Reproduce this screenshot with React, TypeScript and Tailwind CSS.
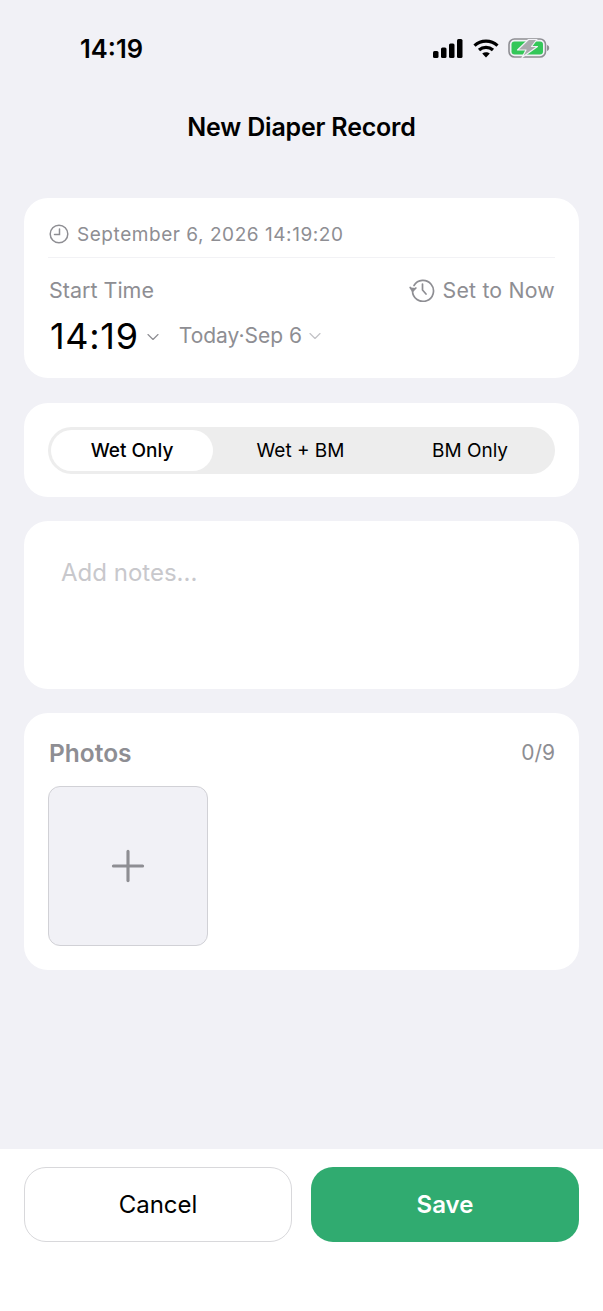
import React from 'react';
import { ChevronDown, Plus } from 'lucide-react';

const StatusIcons = () => (
  <div className="flex items-center gap-[9.5px]">
    <svg width="30" height="19" viewBox="0 0 30 19" fill="#000">
      <rect x="0" y="12" width="5.5" height="7" rx="1.5" />
      <rect x="8" y="8.5" width="5.5" height="10.5" rx="1.5" />
      <rect x="16" y="4.5" width="5.5" height="14.5" rx="1.5" />
      <rect x="24" y="0" width="5.5" height="19" rx="1.5" />
    </svg>
    <svg width="26" height="19" viewBox="0 0 26 19" fill="none" stroke="#000" strokeWidth="3.2">
      <path d="M1.5 6.6C8 .6 18 .6 24.5 6.6" />
      <path d="M6 11C10 7.4 16 7.4 20 11" />
      <path d="M13 18.5L9.2 14.6C11.4 12.8 14.6 12.8 16.8 14.6Z" fill="#000" stroke="none" />
    </svg>
    <svg width="42" height="20" viewBox="0 0 42 20" fill="none">
      <rect x="1" y="1" width="36.5" height="18" rx="5.5" stroke="#8e8e93" strokeWidth="1.6" />
      <rect x="3.5" y="3.5" width="31.5" height="13" rx="3" fill="#34c759" />
      <path d="M39 7v6c1.5-.4 2.2-1.6 2.2-3s-.7-2.6-2.2-3Z" fill="#8e8e93" />
      <path d="M20.5 1.5H29L23.5 8.5H29.5L14 19.5L18 12H9.5Z" fill="#a9a9ad" stroke="#f1f1f6" strokeWidth="1.2" strokeLinejoin="round" />
    </svg>
  </div>
);

const App: React.FC = () => {
  return (
    <div className="flex h-[1311px] w-[603px] flex-col overflow-hidden bg-[#f1f1f6] font-['Inter',sans-serif] text-black">
      <div className="flex h-[98px] items-start justify-between pl-[80px] pr-[53px] pt-[35px]">
        <span className="text-[25.5px] font-semibold leading-[28px]">14:19</span>
        <div className="pt-[3px]">
          <StatusIcons />
        </div>
      </div>

      <h1 className="h-[100px] pt-[14px] text-center text-[25px] font-semibold leading-[30px] tracking-[-0.2px]">
        New Diaper Record
      </h1>

      <div className="flex flex-1 flex-col gap-[24px] px-[24px]">
        <section className="mb-[1px] h-[180px] rounded-[24px] bg-white px-[24px] pt-[25px]">
          <div className="flex h-[35px] items-start gap-[8px] border-b border-[#f2f2f5] text-[#8e8e93]">
            <svg width="20" height="20" viewBox="0 0 20 20" fill="none" stroke="currentColor" strokeWidth="1.5" strokeLinecap="round" className="ml-[1px] mt-[1px]">
              <circle cx="10" cy="10" r="8.8" />
              <path d="M10.5 5v5.5H5.5" />
            </svg>
            <span className="text-[19px] leading-[24px] tracking-[0.55px]">September 6, 2026 14:19:20</span>
          </div>

          <div className="mt-[19px] flex items-center justify-between text-[#8e8e93]">
            <span className="pl-[1px] text-[21.5px] leading-[26px]">Start Time</span>
            <div className="flex items-center gap-[8px]">
              <svg width="26" height="26" viewBox="0 0 26 26" fill="none" stroke="currentColor" strokeWidth="1.7" strokeLinecap="round" strokeLinejoin="round" className="-mt-[3px]">
                <path d="M5 9.5A10.5 10.5 0 1 1 3.5 15" />
                <path d="M1.2 11.5L3.7 15.2L6.9 12" fill="currentColor" />
                <path d="M13.5 8v6l3.5 4" />
              </svg>
              <span className="text-[21.3px] leading-[26px] tracking-[0.2px]">Set to Now</span>
            </div>
          </div>

          <div className="mt-[13px] flex items-center">
            <span className="pl-[2px] text-[36px] leading-[40px] tracking-[0.7px]">14:19</span>
            <ChevronDown size={20} strokeWidth={1.4} className="ml-[4px] mt-[1px] text-[#8e8e93]" />
            <span className="ml-[16px] text-[21px] leading-[26px] text-[#8e8e93]">Today·Sep 6</span>
            <ChevronDown size={20} strokeWidth={1.4} className="ml-[3px] text-[#c2c2c6]" />
          </div>
        </section>

        <section className="h-[94px] rounded-[24px] bg-white px-[24px] pt-[24px]">
          <div className="flex h-[47px] items-center rounded-full bg-[#ededed] p-[3px] text-[19px]">
            <div className="flex h-[41px] w-[162px] items-center justify-center rounded-full bg-white pt-[2px] font-medium">Wet Only</div>
            <div className="flex w-[175px] items-center justify-center pt-[2px]">Wet + BM</div>
            <div className="flex w-[164px] items-center justify-center pt-[2px]">BM Only</div>
          </div>
        </section>

        <section className="h-[168px] rounded-[24px] bg-white px-[37px] pt-[37px]">
          <p className="text-[24px] leading-[30px] text-[#c8c8cc]">Add notes...</p>
        </section>

        <section className="h-[257px] rounded-[24px] bg-white px-[24px] pt-[24px]">
          <div className="flex h-[32px] items-center justify-between">
            <span className="pl-[1px] text-[24.5px] font-semibold text-[#8e8e93]">Photos</span>
            <span className="text-[21px] text-[#8e8e93]">0/9</span>
          </div>
          <div className="mt-[17px] flex h-[160px] w-[160px] items-center justify-center rounded-[12px] border-[1.5px] border-[#d1d1d6] bg-[#f1f1f6]">
            <Plus size={50} strokeWidth={1.5} className="text-[#8e8e93]" />
          </div>
        </section>
      </div>

      <footer className="flex h-[162px] gap-[19px] bg-white px-[24px] pt-[18px]">
        <button className="h-[75px] w-[268px] rounded-[22px] border-[1.5px] border-[#d8d8db] bg-white text-[24px]">Cancel</button>
        <button className="h-[75px] w-[268px] rounded-[22px] bg-[#30ab70] text-[24px] font-semibold text-white">Save</button>
      </footer>
    </div>
  );
};

export default App;
